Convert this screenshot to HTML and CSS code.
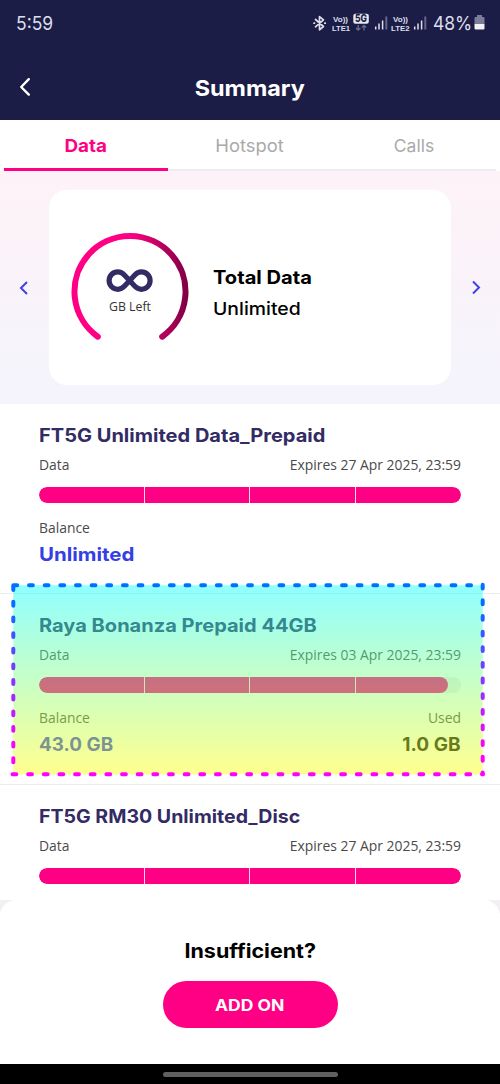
FILE: index.html
```html
<!DOCTYPE html>
<html lang="en">
<head>
<meta charset="utf-8">
<title>Summary</title>
<link rel="stylesheet" href="styles.css">
</head>
<body>
<div class="phone">
  <header class="top">
    <div class="status">
      <span class="clock"><span>5:59</span></span>
      <svg class="status-icons" width="115" height="24" viewBox="312 11 115 24" fill="none">
        <g stroke="#dedfeb" stroke-width="1.700" stroke-linejoin="round" stroke-linecap="round">
          <path d="M315.500 19.500 L323.500 26.500 L319.500 29.800 V16.600 L323.500 19.800 L315.500 26.800"/>
          <path d="M314 23.200h.5M324.800 23.200h.5"/>
        </g>
        <g class="micro" fill="#dedfeb">
          <text x="333" y="21.800" textLength="15" lengthAdjust="spacingAndGlyphs">Vo))</text>
          <text x="332" y="30.800" textLength="18" lengthAdjust="spacingAndGlyphs">LTE1</text>
          <text x="393" y="21.800" textLength="15" lengthAdjust="spacingAndGlyphs">Vo))</text>
          <text x="391" y="30.800" textLength="18.500" lengthAdjust="spacingAndGlyphs">LTE2</text>
        </g>
        <rect x="353.300" y="13.800" width="15.500" height="10" rx="2" fill="#e6e7f0"/>
        <text class="fiveg" x="355" y="22.200" textLength="12" lengthAdjust="spacingAndGlyphs" fill="#1b1d46">5G</text>
        <path d="M358.200 25v5M356 28l2.200 2.200 2.200-2.200M364 30.500v-5M361.800 27.500l2.200-2.200 2.200 2.200" stroke="#6b6c8b" stroke-width="1.300"/>
        <g stroke="#dedfeb" stroke-width="1.500">
          <path d="M375.700 26.500v3M379 23.500v6M382.600 20.500v9M414.700 26.500v3M418 23.500v6M421.600 20.500v9"/>
          <path d="M386.300 16.500v13M425.300 16.500v13" stroke="#66678a" stroke-width="2"/>
        </g>
      </svg>
      <span class="battery-text"><span>48%</span></span>
      <svg class="battery" width="11" height="16" viewBox="0 0 11 16">
        <path d="M3 0h5v2h1.500q1 0 1 1v6H.5V3q0-1 1-1H3z" fill="#7c7d98"/>
        <path d="M.5 9h10v4.500q0 1-1 1h-8q-1 0-1-1z" fill="#f2f2f7"/>
      </svg>
    </div>
    <div class="titlebar">
      <svg class="back" width="14" height="20" viewBox="0 0 14 20" fill="none" stroke="#fff" stroke-width="2.400" stroke-linecap="round" stroke-linejoin="round"><path d="M10.800 2.200 3.200 10l7.600 7.600"/></svg>
      <h1 class="heading"><span>Summary</span></h1>
    </div>
  </header>

  <nav class="tabs">
    <a class="tab active"><span>Data</span></a>
    <a class="tab hotspot"><span>Hotspot</span></a>
    <a class="tab calls"><span>Calls</span></a>
  </nav>

  <section class="hero">
    <svg class="arrow" width="12" height="16" viewBox="0 0 12 16"><path d="M9 2 3 8 9 14"/></svg>
    <div class="card">
      <div class="gauge">
        <svg width="120" height="112" viewBox="0 0 120 112" fill="none">
          <defs><linearGradient id="arc" gradientUnits="userSpaceOnUse" x1="0" y1="0" x2="118" y2="0"><stop offset=".5" stop-color="#ff0084"/><stop offset="1" stop-color="#7d0041"/></linearGradient></defs>
          <path d="M26.800 104.700A55.500 55.500 0 1 1 91.200 104.700" stroke="url(#arc)" stroke-width="6" stroke-linecap="round"/>
          <path d="M58.600 48.600 53.600 43.200C51.500 41 49.500 39.900 46.800 39.900a8.700 8.700 0 0 0 0 17.400C49.500 57.300 51.500 56.200 53.600 54L63.600 43.200C65.700 41 67.700 39.900 70.400 39.900a8.700 8.700 0 0 1 0 17.400C67.700 57.300 65.700 56.200 63.600 54Z" stroke="#332b63" stroke-width="5.200"/>
        </svg>
        <span class="gauge-label">GB Left</span>
      </div>
      <div class="total">
        <strong class="m total-name"><span>Total Data</span></strong>
        <span class="m total-value"><span>Unlimited</span></span>
      </div>
    </div>
    <svg class="arrow" width="12" height="16" viewBox="0 0 12 16"><path d="m3 1.500 6 6-6 6"/></svg>
  </section>

  <main class="plans">
    <article class="plan">
      <h2 class="m name"><span>FT5G Unlimited Data_Prepaid</span></h2>
      <div class="row"><span>Data</span><span>Expires 27 Apr 2025, 23:59</span></div>
      <div class="bar"><div class="fill"></div><i></i><i></i><i></i><i></i></div>
      <div class="row lower"><span>Balance</span></div>
      <div class="values"><span class="m blue unlimited"><span>Unlimited</span></span></div>
    </article>
    <article class="plan">
      <h2 class="m name"><span>Raya Bonanza Prepaid 44GB</span></h2>
      <div class="row"><span>Data</span><span>Expires 03 Apr 2025, 23:59</span></div>
      <div class="bar"><div class="fill" style="width:97%"></div><i></i><i></i><i></i><i></i></div>
      <div class="row lower"><span>Balance</span><span>Used</span></div>
      <div class="values"><span class="m blue amount"><span>43.0 GB</span></span><span class="m used"><span>1.0 GB</span></span></div>
      <svg class="highlight" width="480" height="196" viewBox="10 582 480 196" fill="none">
        <defs>
          <linearGradient id="tint" x1="0" y1="0" x2="0" y2="1"><stop stop-color="#0ff"/><stop offset="1" stop-color="#ff0"/></linearGradient>
          <linearGradient id="edge" gradientUnits="userSpaceOnUse" x1="0" y1="600" x2="0" y2="750"><stop stop-color="#0070ff"/><stop offset="1" stop-color="#f0f"/></linearGradient>
        </defs>
        <rect x="13.300" y="585.300" width="469.400" height="189" fill="url(#tint)" fill-opacity=".44"/>
        <g stroke="url(#edge)" stroke-width="4" stroke-linecap="round" stroke-dasharray="3.800 11.850">
          <path d="M13.400 585.300H480L480 585.301"/>
          <path d="M13.300 586.200 13.301 772"/>
          <path d="M482.700 584.700 482.701 774.300"/>
          <path d="M12.500 774.300H482.900"/>
        </g>
      </svg>
    </article>
    <article class="plan last">
      <h2 class="m name short"><span>FT5G RM30 Unlimited_Disc</span></h2>
      <div class="row"><span>Data</span><span>Expires 27 Apr 2025, 23:59</span></div>
      <div class="bar"><div class="fill"></div><i></i><i></i><i></i><i></i></div>
    </article>
  </main>

  <div class="sheet-wrap">
    <footer class="sheet">
      <p class="m question"><span>Insufficient?</span></p>
      <button class="m addon"><span>ADD ON</span></button>
    </footer>
  </div>
  <div class="navbar"><div class="pill"></div></div>
</div>
</body>
</html>
```
FILE: styles.css
```css
* { box-sizing: border-box; }
body { margin: 0; background: #fff; font-family: "Open Sans", sans-serif; }
.phone { width: 500px; height: 1084px; display: flex; flex-direction: column; overflow: hidden; }
h1, h2, p { margin: 0; }
.m, .heading, .tab { font-family: Inter, sans-serif; white-space: nowrap; }
.m > span, .heading > span, .tab > span { display: inline-block; }
.m > span { transform-origin: left; }

.top { height: 120px; background: #1b1d46; color: #fff; flex: none; }
.status { height: 46px; display: flex; align-items: center; padding: 0 15px 0 16px; }
.clock { font: 400 19px/46px Inter, sans-serif; color: #dedfeb; flex: 1; padding-top: 1px; }
.clock span, .battery-text span { display: inline-block; transform: scaleX(.92); transform-origin: left; }
.status-icons { margin-right: 6px; }
.micro { font: 700 8px "Liberation Sans", sans-serif; }
.fiveg { font: 800 10.500px Inter, sans-serif; }
.battery-text { font: 400 19px/46px Inter, sans-serif; color: #dedfeb; width: 41px; padding-top: 1px; }
.titlebar { height: 74px; position: relative; display: flex; align-items: center; justify-content: center; padding-top: 10px; }
.back { position: absolute; left: 18px; top: 31px; }
.heading { font-size: 22px; font-weight: 700; line-height: 28px; }
.heading span { transform: scaleX(1.063); }

.tabs { height: 51px; flex: none; margin: 0 4px; display: grid; grid-template-columns: repeat(3, 1fr); border-bottom: 2px solid #efedf1; }
.tab { height: 51px; text-align: center; font-size: 17.500px; line-height: 52px; color: #a9a9ab; }
.active { color: #ff0084; font-weight: 700; border-bottom: 3px solid #ff0084; }
.active span { transform: scaleX(1.077); }
.hotspot span { transform: scaleX(1.05); }

.hero { height: 233px; flex: none; background: linear-gradient(#fdf2f7, #f9f3f9 50%, #f4f4fc); display: flex; align-items: center; justify-content: space-between; padding: 0 18px; }
.arrow { fill: none; stroke: #3d43e6; stroke-width: 2; }
.card { width: 402px; height: 195px; border-radius: 18px; background: #fff; display: flex; align-items: center; padding-left: 22px; }
.gauge { width: 120px; height: 112px; position: relative; }
.gauge svg { display: block; }
.gauge-label { position: absolute; left: 0; width: 118px; top: 66px; text-align: center; font-size: 12.300px; line-height: 18px; color: #333; }
.total { display: flex; flex-direction: column; gap: 6px; margin-left: 22px; padding-top: 10px; color: #000; }
.total-name { font-size: 18.500px; line-height: 26px; font-weight: 700; }
.total-name span { transform: scaleX(1.088); }
.total-value { font-size: 17.500px; line-height: 26px; font-weight: 500; }
.total-value span { transform: scaleX(1.108); }

.plans { height: 496px; flex: none; overflow: hidden; }
.plan { height: 190.400px; position: relative; padding: 18px 39px 0; border-bottom: 1.500px solid #ececee; }
.plan.last { border: 0; }
.name { font-size: 18.500px; line-height: 26px; font-weight: 700; color: #332b63; }
.name span { transform: scaleX(1.083); }
.name.short span { transform: scaleX(1.057); }
.row { display: flex; justify-content: space-between; font-size: 13.900px; line-height: 20px; color: #4a4a4a; margin-top: 7px; }
.bar { height: 16px; margin-top: 12px; border-radius: 8px; background: #eee; position: relative; display: grid; grid-template-columns: repeat(4, 1fr); overflow: hidden; }
.bar i { position: relative; border-right: 1.500px solid #ffd9ec; }
.bar i:last-child { border: 0; }
.fill { position: absolute; inset: 0 auto 0 0; width: 100%; background: #ff0084; border-radius: 8px; }
.lower { margin-top: 15px; }
.values { display: flex; justify-content: space-between; font-size: 18.500px; line-height: 26px; font-weight: 700; margin-top: 2.500px; }
.blue { color: #3540e4; }
.unlimited span { transform: scaleX(1.105); }
.amount span { transform: scaleX(1.02); }
.used { color: #111; }
.used span { transform: scaleX(1.03); transform-origin: right; }
.highlight { position: absolute; left: 10px; top: -12.400px; }

.sheet-wrap { height: 164px; flex: none; background: #f3f0f3; }
.sheet { height: 164px; border-radius: 16px 16px 0 0; background: #fff; display: flex; flex-direction: column; align-items: center; padding-top: 37px; }
.question { font-size: 20px; line-height: 28px; font-weight: 700; color: #000; }
.question span { transform: scaleX(1.074); transform-origin: center; }
.addon { width: 175px; height: 47px; margin-top: 16px; padding: 0; border: 0; border-radius: 24px; background: #ff0084; color: #fff; font-size: 16px; font-weight: 700; }
.addon span { transform: scaleX(1.095); transform-origin: center; }
.navbar { flex: 1; background: #000; display: flex; justify-content: center; padding-top: 8px; }
.pill { width: 175px; height: 5px; border-radius: 3px; background: #606060; }
```
